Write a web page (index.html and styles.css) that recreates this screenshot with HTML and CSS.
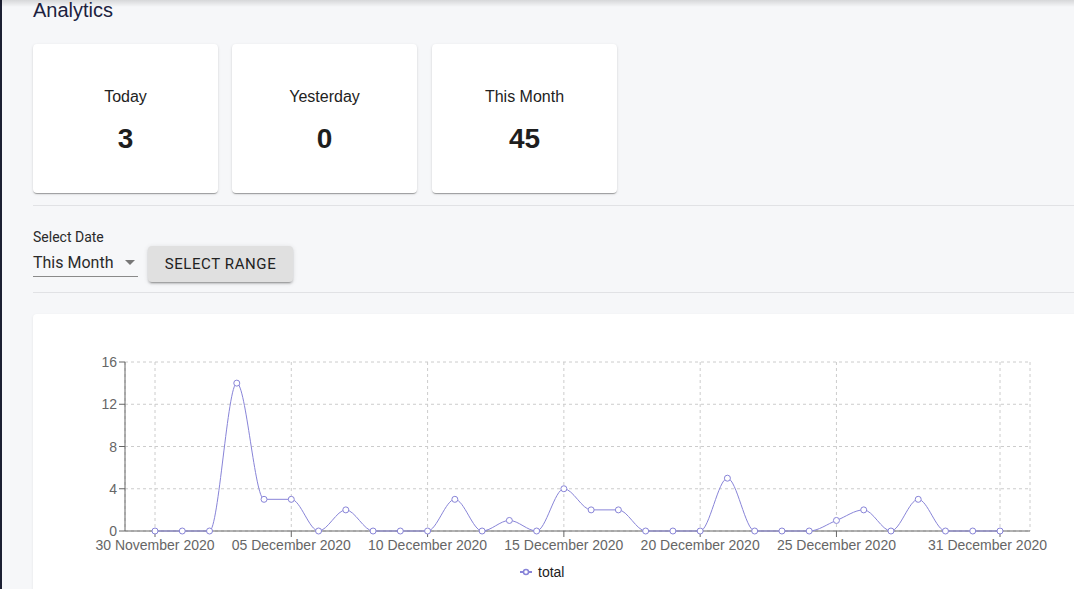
FILE: index.html
```html
<!DOCTYPE html>
<html lang="en">
<head>
<meta charset="utf-8">
<title>Analytics</title>
<link rel="stylesheet" href="styles.css">
</head>
<body>
<div class="shell">
  <div class="rail"></div>
  <main class="content">
    <h1 class="title">Analytics</h1>
    <section class="stats">
      <div class="stat-card"><div class="stat-label">Today</div><div class="stat-value">3</div></div>
      <div class="stat-card"><div class="stat-label">Yesterday</div><div class="stat-value">0</div></div>
      <div class="stat-card"><div class="stat-label">This Month</div><div class="stat-value">45</div></div>
    </section>
    <hr class="divider">
    <section class="filters">
      <div class="field">
        <label class="field-label">Select Date</label>
        <div class="select">
          <span class="select-value">This Month</span>
          <svg class="select-arrow" viewBox="0 0 24 24" width="24" height="24"><path d="M7 10l5 5 5-5z"/></svg>
        </div>
      </div>
      <button class="btn">Select Range</button>
    </section>
    <hr class="divider divider-2">
    <section class="chart-card">
      <svg id="chart" class="chart" width="1060" height="290" xmlns="http://www.w3.org/2000/svg"></svg>
    </section>
  </main>
</div>
<script src="script.js"></script>
</body>
</html>
```

FILE: styles.css
```css
* { box-sizing: border-box; }
html, body { margin: 0; padding: 0; }
body {
  background: #f6f7f9;
  font-family: "Liberation Sans", Arial, sans-serif;
  color: #222;
  overflow: hidden;
  height: 589px;
}
body::before {
  content: "";
  position: absolute;
  left: 0; top: 0; right: 0;
  height: 7px;
  background: linear-gradient(to bottom, rgba(0,0,0,0.13), rgba(0,0,0,0));
  z-index: 5;
}
.shell { display: flex; height: 589px; }
.rail { width: 2px; flex: 0 0 2px; background: #1c2033; }
.content { flex: 1; padding-left: 31px; min-width: 0; }
.title {
  margin: -2px 0 0 0;
  font-size: 20px;
  line-height: 24px;
  font-weight: 400;
  color: #1c2240;
}
.stats { display: flex; gap: 14px; margin-top: 22px; }
.stat-card {
  width: 185px;
  height: 149px;
  background: #fff;
  border-radius: 4px;
  box-shadow: 0 2px 1px -1px rgba(0,0,0,0.2), 0 1px 1px 0 rgba(0,0,0,0.14), 0 1px 3px 0 rgba(0,0,0,0.12);
  display: flex;
  flex-direction: column;
  align-items: center;
  padding-top: 43px;
}
.stat-card + .stat-card + .stat-card { margin-left: 1px; }
.stat-label { font-size: 16px; line-height: 19px; color: #222; }
.stat-value { font-size: 28px; line-height: 32px; font-weight: 700; color: #1e1e1e; margin-top: 17px; }
.divider { border: 0; border-top: 1px solid #e1e2e5; margin: 12px 0 0 0; }
.filters { display: flex; align-items: flex-end; gap: 10px; margin-top: 23px; }
.field { display: flex; flex-direction: column; width: 105px; font-family: Roboto, "Liberation Sans", sans-serif; }
.field-label { font-size: 14px; line-height: 16px; color: #2a2a2a; }
.select {
  display: flex;
  align-items: center;
  justify-content: space-between;
  height: 31px;
  border-bottom: 1px solid #8a8a8a;
  margin-top: 1px;
}
.select-value { font-size: 16px; color: #2a2a2a; padding-top: 2px; }
.select-arrow { fill: #777; margin-right: -4px; margin-top: 2px; }
.btn {
  font-family: Roboto, "Liberation Sans", sans-serif;
  font-size: 15px;
  letter-spacing: 0.6px;
  text-transform: uppercase;
  color: #222;
  background: #e0e0e0;
  border: 0;
  border-radius: 4px;
  width: 145px;
  height: 36px;
  margin-bottom: -5px;
  box-shadow: 0 3px 1px -2px rgba(0,0,0,0.2), 0 2px 2px 0 rgba(0,0,0,0.14), 0 1px 5px 0 rgba(0,0,0,0.12);
}
.divider-2 { margin-top: 15px; }
.chart-card {
  margin-top: 21px;
  background: #fff;
  border-radius: 4px 0 0 0;
  height: 300px;
  width: calc(100% + 20px);
  box-shadow: 0 1px 3px rgba(0,0,0,0.08);
}
.chart { display: block; font-family: "Liberation Sans", Arial, sans-serif; }
```

FILE: script.js
```js
(function () {
  var NS = "http://www.w3.org/2000/svg";
  var svg = document.getElementById("chart");
  var data = [0,0,0,14,3,3,0,2,0,0,0,3,0,1,0,4,2,2,0,0,0,5,0,0,0,1,2,0,3,0,0,0];
  var left = 92, right = 997, top = 48, bottom = 217, pad = 30;
  var step = (right - left - 2 * pad) / (data.length - 1);
  function X(i) { return left + pad + i * step; }
  function Y(v) { return bottom - v * (bottom - top) / 16; }
  function el(name, attrs, text) {
    var e = document.createElementNS(NS, name);
    for (var k in attrs) e.setAttribute(k, attrs[k]);
    if (text != null) e.textContent = text;
    svg.appendChild(e);
    return e;
  }
  var yTicks = [0, 4, 8, 12, 16];
  var xTicks = [[0, "30 November 2020"], [5, "05 December 2020"], [10, "10 December 2020"], [15, "15 December 2020"], [20, "20 December 2020"], [25, "25 December 2020"], [31, "31 December 2020"]];
  // grid
  yTicks.forEach(function (v) {
    el("line", { x1: left, x2: right, y1: Y(v), y2: Y(v), stroke: "#ccc", "stroke-dasharray": "3 3" });
  });
  var vx = xTicks.map(function (t) { return X(t[0]); }).concat([left, right]);
  vx.forEach(function (x) {
    el("line", { x1: x, x2: x, y1: top, y2: bottom, stroke: "#ccc", "stroke-dasharray": "3 3" });
  });
  // axes
  el("line", { x1: left, x2: left, y1: top, y2: bottom, stroke: "#666" });
  el("line", { x1: left, x2: right, y1: bottom, y2: bottom, stroke: "#666" });
  yTicks.forEach(function (v) {
    el("line", { x1: left - 6, x2: left, y1: Y(v), y2: Y(v), stroke: "#666" });
    el("text", { x: left - 8, y: Y(v) + 5, "text-anchor": "end", fill: "#666", "font-size": "14" }, String(v));
  });
  xTicks.forEach(function (t, idx) {
    var x = X(t[0]);
    el("line", { x1: x, x2: x, y1: bottom, y2: bottom + 6, stroke: "#666" });
    if (idx === xTicks.length - 1) {
      el("text", { x: 1014, y: bottom + 19, "text-anchor": "end", fill: "#666", "font-size": "14" }, t[1]);
    } else {
      el("text", { x: x, y: bottom + 19, "text-anchor": "middle", fill: "#666", "font-size": "14" }, t[1]);
    }
  });
  // monotone X curve
  var pts = data.map(function (v, i) { return [X(i), Y(v)]; });
  var n = pts.length;
  var s = [];
  for (var i = 0; i < n - 1; i++) s.push((pts[i + 1][1] - pts[i][1]) / (pts[i + 1][0] - pts[i][0]));
  function sign(v) { return v < 0 ? -1 : 1; }
  var t = new Array(n);
  for (i = 1; i < n - 1; i++) {
    var h0 = pts[i][0] - pts[i - 1][0], h1 = pts[i + 1][0] - pts[i][0];
    var s0 = s[i - 1], s1 = s[i];
    var p = (s0 * h1 + s1 * h0) / (h0 + h1);
    t[i] = (sign(s0) + sign(s1)) * Math.min(Math.abs(s0), Math.abs(s1), 0.5 * Math.abs(p)) || 0;
  }
  t[0] = (3 * s[0] - t[1]) / 2;
  t[n - 1] = (3 * s[n - 2] - t[n - 2]) / 2;
  var d = "M" + pts[0][0] + "," + pts[0][1];
  for (i = 0; i < n - 1; i++) {
    var dx = (pts[i + 1][0] - pts[i][0]) / 3;
    d += "C" + (pts[i][0] + dx) + "," + (pts[i][1] + dx * t[i]) + "," + (pts[i + 1][0] - dx) + "," + (pts[i + 1][1] - dx * t[i + 1]) + "," + pts[i + 1][0] + "," + pts[i + 1][1];
  }
  el("path", { d: d, fill: "none", stroke: "#8884d8", "stroke-width": "1" });
  pts.forEach(function (q) {
    el("circle", { cx: q[0], cy: q[1], r: 3, fill: "#fff", stroke: "#8884d8", "stroke-width": "1" });
  });
  // legend
  var lx = 487, ly = 258;
  el("line", { x1: lx, x2: lx + 12, y1: ly, y2: ly, stroke: "#8884d8", "stroke-width": "2" });
  el("circle", { cx: lx + 6, cy: ly, r: 2.5, fill: "#fff", stroke: "#8884d8", "stroke-width": "1.5" });
  el("text", { x: lx + 18, y: ly + 5, fill: "#222", "font-size": "14" }, "total");
})();
```
